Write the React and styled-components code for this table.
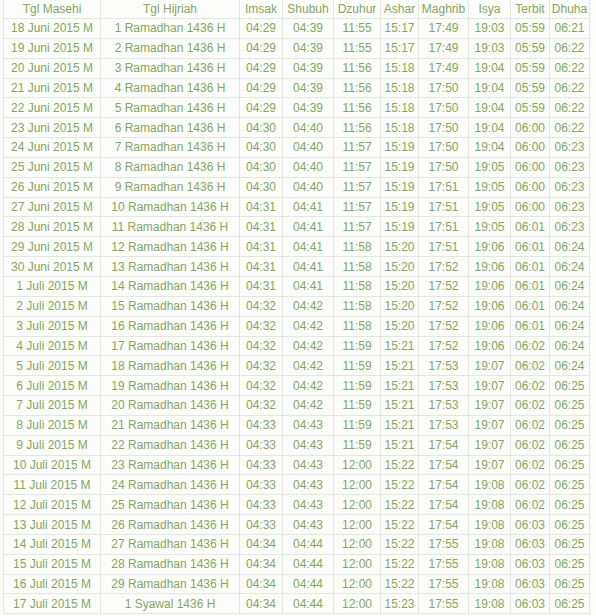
import React from 'react';
import styled, { createGlobalStyle } from 'styled-components';

const GlobalStyle = createGlobalStyle`
  html, body {
    margin: 0;
    padding: 0;
    background: #ffffff;
  }
`;

const Wrapper = styled.div`
  padding: 0 0 0 3px;
  width: 596px;
  height: 616px;
  overflow: hidden;
  box-sizing: border-box;
  background: #fdfdfc;
`;

const Table = styled.table`
  border-collapse: collapse;
  table-layout: fixed;
  width: 586px;
  margin-top: -1px;
  font-family: "Liberation Sans", Arial, sans-serif;
  font-size: 12px;
  color: #84a660;
`;

const Cell = styled.td`
  border: 1px solid #e4e7df;
  height: 18.85px;
  padding: 0;
  text-align: center;
  white-space: nowrap;
  line-height: 14px;
`;

const HeadCell = styled(Cell).attrs({ as: 'th' })`
  font-weight: normal;
  height: 18px;
`;

const widths = [97, 139, 43, 51, 47, 38, 50, 42, 39, 40];

const headers = ['Tgl Masehi', 'Tgl Hijriah', 'Imsak', 'Shubuh', 'Dzuhur', 'Ashar', 'Maghrib', 'Isya', 'Terbit', 'Dhuha'];

const times = [
  '04:29 04:39 11:55 15:17 17:49 19:03 05:59 06:21',
  '04:29 04:39 11:55 15:17 17:49 19:03 05:59 06:22',
  '04:29 04:39 11:56 15:18 17:49 19:04 05:59 06:22',
  '04:29 04:39 11:56 15:18 17:50 19:04 05:59 06:22',
  '04:29 04:39 11:56 15:18 17:50 19:04 05:59 06:22',
  '04:30 04:40 11:56 15:18 17:50 19:04 06:00 06:22',
  '04:30 04:40 11:57 15:19 17:50 19:04 06:00 06:23',
  '04:30 04:40 11:57 15:19 17:50 19:05 06:00 06:23',
  '04:30 04:40 11:57 15:19 17:51 19:05 06:00 06:23',
  '04:31 04:41 11:57 15:19 17:51 19:05 06:00 06:23',
  '04:31 04:41 11:57 15:19 17:51 19:05 06:01 06:23',
  '04:31 04:41 11:58 15:20 17:51 19:06 06:01 06:24',
  '04:31 04:41 11:58 15:20 17:52 19:06 06:01 06:24',
  '04:31 04:41 11:58 15:20 17:52 19:06 06:01 06:24',
  '04:32 04:42 11:58 15:20 17:52 19:06 06:01 06:24',
  '04:32 04:42 11:58 15:20 17:52 19:06 06:01 06:24',
  '04:32 04:42 11:59 15:21 17:52 19:06 06:02 06:24',
  '04:32 04:42 11:59 15:21 17:53 19:07 06:02 06:24',
  '04:32 04:42 11:59 15:21 17:53 19:07 06:02 06:25',
  '04:32 04:42 11:59 15:21 17:53 19:07 06:02 06:25',
  '04:33 04:43 11:59 15:21 17:53 19:07 06:02 06:25',
  '04:33 04:43 11:59 15:21 17:54 19:07 06:02 06:25',
  '04:33 04:43 12:00 15:22 17:54 19:07 06:02 06:25',
  '04:33 04:43 12:00 15:22 17:54 19:08 06:02 06:25',
  '04:33 04:43 12:00 15:22 17:54 19:08 06:02 06:25',
  '04:33 04:43 12:00 15:22 17:54 19:08 06:03 06:25',
  '04:34 04:44 12:00 15:22 17:55 19:08 06:03 06:25',
  '04:34 04:44 12:00 15:22 17:55 19:08 06:03 06:25',
  '04:34 04:44 12:00 15:22 17:55 19:08 06:03 06:25',
  '04:34 04:44 12:00 15:23 17:55 19:08 06:03 06:25',
];

// masehi date for row i, starting 18 Juni 2015
const masehi = (i) => {
  const d = 18 + i;
  return d <= 30 ? `${d} Juni 2015 M` : `${d - 30} Juli 2015 M`;
};

const hijriah = (i) => (i < 29 ? `${i + 1} Ramadhan 1436 H` : '1 Syawal 1436 H');

const rows = times.map((t, i) => [masehi(i), hijriah(i), ...t.split(' ')]);

export default function App() {
  return (
    <Wrapper>
      <GlobalStyle />
      <Table>
        <colgroup>
          {widths.map((w, i) => (
            <col key={i} style={{ width: w }} />
          ))}
        </colgroup>
        <thead>
          <tr>
            {headers.map((h) => (
              <HeadCell key={h}>{h}</HeadCell>
            ))}
          </tr>
        </thead>
        <tbody>
          {rows.map((r, i) => (
            <tr key={i}>
              {r.map((v, j) => (
                <Cell key={j}>{v}</Cell>
              ))}
            </tr>
          ))}
        </tbody>
      </Table>
    </Wrapper>
  );
}
